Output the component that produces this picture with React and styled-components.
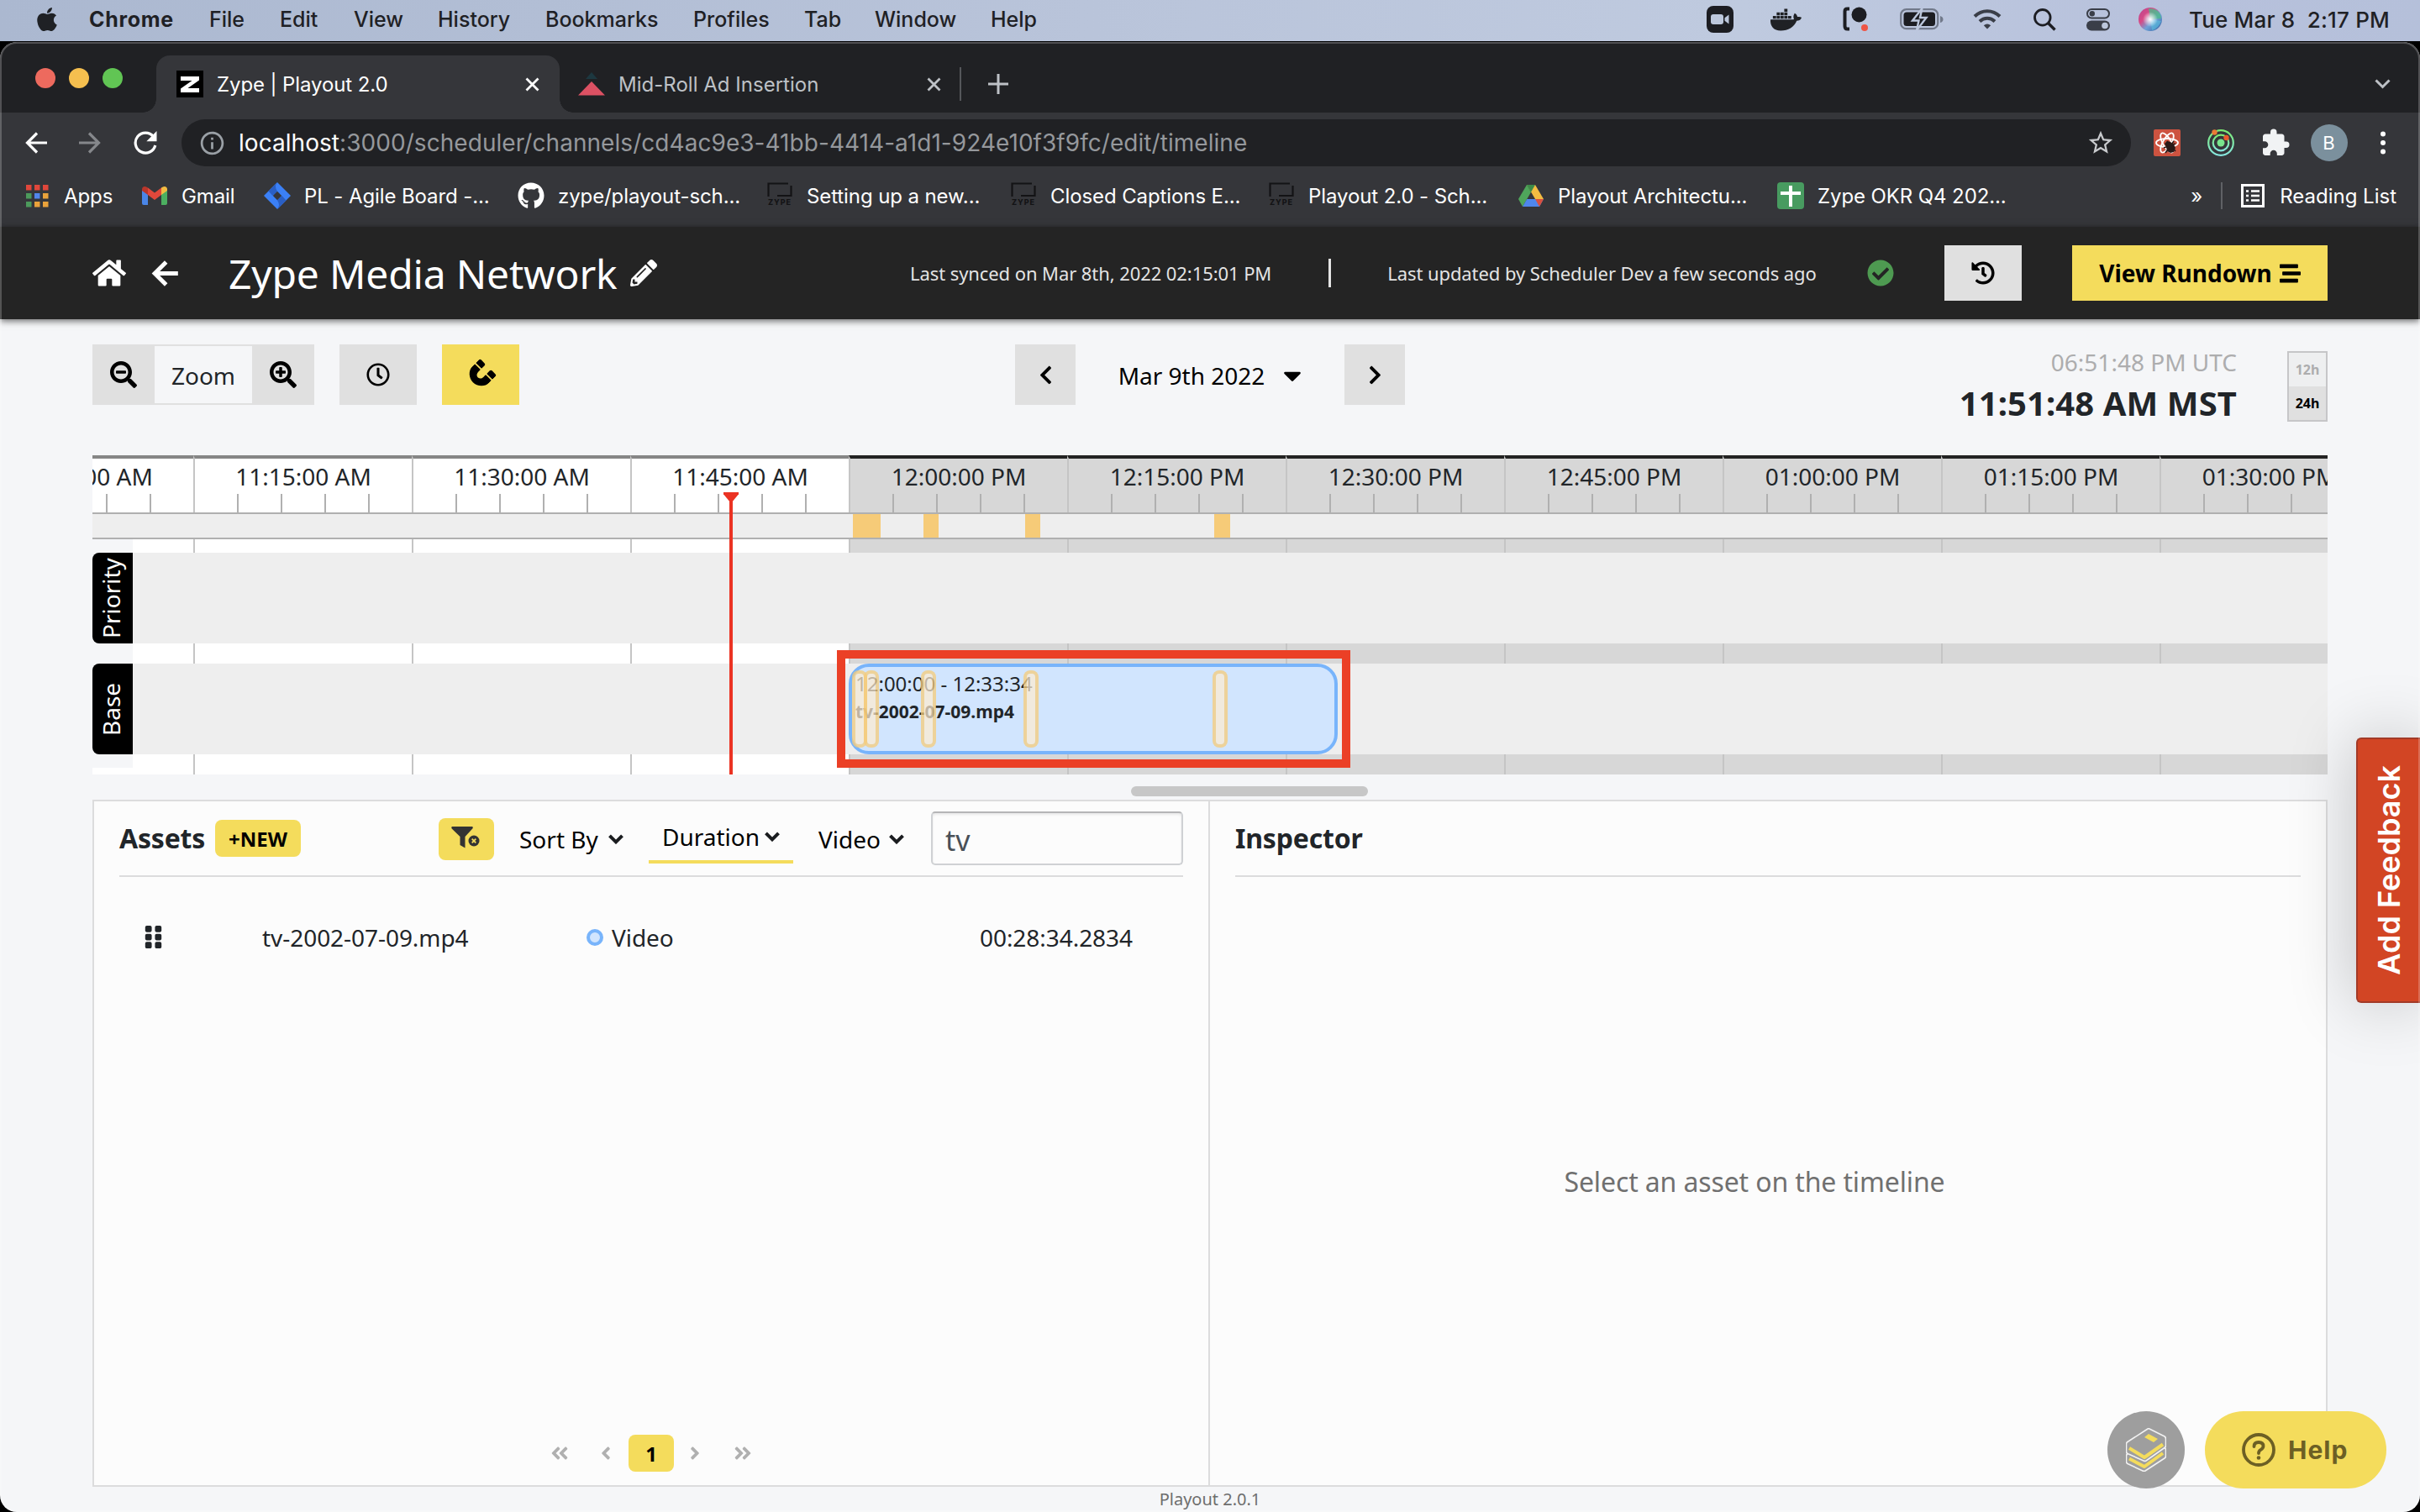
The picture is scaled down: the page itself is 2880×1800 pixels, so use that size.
import React from "react";
import styled, { createGlobalStyle, css } from "styled-components";
import {
  FaApple, FaDocker, FaHome, FaSearchMinus, FaSearchPlus, FaMagnet, FaHistory, FaStream,
  FaCheckCircle, FaGithub, FaGripVertical, FaChevronLeft, FaChevronRight, FaPencilAlt,
  FaRegClock, FaAngleDoubleLeft, FaAngleDoubleRight, FaAngleLeft, FaAngleRight, FaCaretDown,
} from "react-icons/fa";
import { MdExtension, MdStarOutline, MdInfoOutline } from "react-icons/md";

const appFont = '"Noto Sans", "Open Sans", sans-serif';
const systemFont = 'Inter, Roboto, "Liberation Sans", sans-serif';
const yellow = "#f4dc5c";
const grey = "#e0e0e0";
const ink = "#212529";
const line = "#dcdcdd";

const GlobalStyle = createGlobalStyle`
  * { box-sizing: border-box; }
  html, body { margin: 0; background: #000; overflow: hidden; }
  svg { display: block; flex: none; }
  button, input { font: inherit; border: 0; padding: 0; margin: 0; color: inherit; }
`;

const Desktop = styled.div`
  width: 2880px;
  height: 1800px;
  display: flex;
  flex-direction: column;
  background: #000;
  font-family: ${systemFont};
  white-space: nowrap;
`;

/* ---------- menu bar ---------- */

const MenuBar = styled.header`
  height: 49px;
  flex: none;
  display: flex;
  align-items: center;
  justify-content: space-between;
  padding: 0 36px 3px 40px;
  background: linear-gradient(90deg, #abb8d0 0%, #b9c4da 45%, #bfcadf 72%, #b7c1dc 90%, #b5c0da 100%);
  color: #1f2125;
  font-size: 25px;
`;
const MenuGroup = styled.nav`
  display: flex;
  align-items: center;
`;
const MenuItem = styled.span`
  width: ${(p) => p.$w}px;
  font-weight: ${(p) => (p.$bold ? 700 : 450)};
  letter-spacing: ${(p) => (p.$bold ? 0.7 : 0)}px;
`;
const StatusIcon = styled.span`
  width: ${(p) => p.$w}px;
  display: flex;
  align-items: center;
`;
const ClockText = styled.span`
  white-space: pre;
  font-size: 26px;
  letter-spacing: 0.2px;
  font-weight: 450;
`;

/* ---------- browser chrome ---------- */

const Window = styled.main`
  position: relative;
  flex: 1;
  min-height: 0;
  display: flex;
  flex-direction: column;
  background: #f5f6f8;
  border-radius: 20px;
  overflow: hidden;
  margin-top: 1px;
  &::after {
    content: "";
    position: absolute;
    inset: 0;
    border-radius: 20px;
    border: 2px solid rgba(255, 255, 255, 0.22);
    pointer-events: none;
  }
`;
const TabStrip = styled.div`
  height: 84px;
  flex: none;
  background: #202124;
  display: flex;
  align-items: flex-end;
  padding: 0 35px 0 42px;
  color: #bdc1c6;
  font-size: 24px;
`;
const Lights = styled.div`
  display: flex;
  gap: 16px;
  width: 144px;
  height: 82px;
  align-items: center;
`;
const Light = styled.i`
  width: 24px;
  height: 24px;
  border-radius: 50%;
  background: ${(p) => p.$c};
`;
const Tab = styled.div`
  position: relative;
  height: 68px;
  width: 480px;
  display: flex;
  align-items: center;
  padding: 0 ${(p) => (p.$active ? "24px 0 24px" : "26px 0 22px")};
  gap: 16px;
  letter-spacing: ${(p) => (p.$active ? -0.1 : 0.02)}px;
  ${(p) =>
    p.$active &&
    css`
      background: #35363a;
      color: #fff;
      border-radius: 16px 16px 0 0;
      &::before,
      &::after {
        content: "";
        position: absolute;
        bottom: 0;
        width: 16px;
        height: 16px;
      }
      &::before {
        left: -16px;
        background: radial-gradient(circle at 0 0, transparent 15.5px, #35363a 16px);
      }
      &::after {
        right: -16px;
        background: radial-gradient(circle at 100% 0, transparent 15.5px, #35363a 16px);
      }
    `}
`;
const TabTitle = styled.span`
  flex: 1;
`;
const TabTools = styled.div`
  flex: 1;
  height: 68px;
  display: flex;
  align-items: center;
  justify-content: space-between;
`;
const NewTab = styled.span`
  display: flex;
  align-items: center;
  height: 40px;
  padding-left: 32px;
  margin-left: -4px;
  border-left: 2px solid #55575b;
`;
const AddressRow = styled.div`
  height: 72px;
  flex: none;
  background: #35363a;
  display: flex;
  align-items: center;
  padding: 0 41px 0 29px;
`;
const NavSlot = styled.span`
  display: flex;
  width: ${(p) => p.$w}px;
`;
const Omnibox = styled.div`
  width: 2320px;
  height: 56px;
  border-radius: 28px;
  background: #202124;
  display: flex;
  align-items: center;
  padding: 0 19px 0 20px;
  color: #9aa0a6;
  font-size: 28px;
`;
const Url = styled.span`
  flex: 1;
  margin-left: 15px;
  color: #95989c;
  letter-spacing: 0.05px;
  b {
    font-weight: 400;
    color: #fff;
  }
`;
const Extensions = styled.div`
  flex: 1;
  display: flex;
  align-items: center;
  justify-content: space-between;
  padding-left: 27px;
`;
const Avatar = styled.span`
  width: 44px;
  height: 44px;
  margin: 0 8px 0 -8px;
  border-radius: 50%;
  background: #7b909d;
  color: #fff;
  font-size: 22px;
  display: grid;
  place-items: center;
`;
const BookmarkBar = styled.div`
  height: 64px;
  flex: none;
  background: #35363a;
  display: flex;
  align-items: flex-start;
  padding: 11px 28px 0 28px;
  color: #fff;
  font-size: 24px;
`;
const Bookmark = styled.span`
  width: ${(p) => p.$w}px;
  height: 32px;
  display: flex;
  align-items: center;
  gap: 16px;
  letter-spacing: -0.1px;
`;
const ReadingList = styled.span`
  margin-left: auto;
  height: 32px;
  display: flex;
  align-items: center;
  gap: 18px;
`;
const BarDivider = styled.i`
  width: 2px;
  height: 32px;
  background: #5f6165;
  margin: 0 4px;
`;

/* ---------- application header ---------- */

const AppHeader = styled.header`
  position: relative;
  height: 110px;
  flex: none;
  background: #242424;
  color: #fff;
  font-family: ${appFont};
  display: flex;
  align-items: center;
  padding: 0 110px;
  box-shadow: 0 2px 8px rgba(0, 0, 0, 0.6);
`;
const Title = styled.h1`
  margin: 0 0 0 59px;
  width: 478px;
  font-size: 48px;
  font-weight: 400;
  letter-spacing: -0.2px;
`;
const Status = styled.div`
  display: flex;
  align-items: center;
  margin-left: 301px;
  font-size: 22px;
  letter-spacing: -0.08px;
  color: #e4e4e4;
`;
const StatusDivider = styled.i`
  width: 3px;
  height: 34px;
  background: #e4e4e4;
  margin: 0 67px 0 68px;
`;
const HeaderActions = styled.div`
  margin-left: auto;
  display: flex;
  align-items: center;
  color: #000;
`;
const Button = styled.button`
  display: flex;
  align-items: center;
  justify-content: center;
  gap: 9px;
  width: ${(p) => p.$w}px;
  height: ${(p) => p.$h}px;
  background: ${(p) => (p.$yellow ? yellow : grey)};
  border-radius: ${(p) => p.$r ?? 0}px;
  color: #000;
  font-size: ${(p) => p.$size ?? 28}px;
  font-weight: 700;
`;

/* ---------- toolbar ---------- */

const Page = styled.section`
  flex: 1;
  min-height: 0;
  display: flex;
  flex-direction: column;
  padding: 30px 110px 0;
  font-family: ${appFont};
  font-size: 28px;
  color: ${ink};
`;
const Toolbar = styled.div`
  height: 132px;
  flex: none;
  display: grid;
  grid-template-columns: 1fr auto 1fr;
  align-items: start;
`;
const ToolGroup = styled.div`
  display: flex;
  gap: 30px;
`;
const ZoomGroup = styled.div`
  display: flex;
`;
const ZoomLabel = styled.span`
  width: 116px;
  height: 72px;
  border: solid ${grey};
  border-width: 2px 0;
  display: grid;
  place-items: center;
  padding-top: 2px;
`;
const DatePicker = styled.div`
  display: flex;
`;
const DateValue = styled.div`
  width: 320px;
  display: flex;
  align-items: center;
  justify-content: center;
  gap: 16px;
  padding: 2px 0 0 6px;
  color: #000;
`;
const ClockPanel = styled.div`
  display: flex;
  justify-content: flex-end;
  gap: 60px;
`;
const Times = styled.div`
  text-align: right;
  padding-top: 6px;
`;
const Utc = styled.div`
  line-height: 30px;
  color: #adadae;
`;
const Local = styled.div`
  margin-top: 14px;
  line-height: 40px;
  font-size: 40px;
  font-weight: 700;
  letter-spacing: 0.1px;
`;
const FormatToggle = styled.div`
  margin-top: 8px;
  width: 48px;
  height: 84px;
  border: 2px solid #c6c6c8;
  display: grid;
  grid-template-rows: 1fr 1fr;
`;
const FormatOption = styled.span`
  display: grid;
  place-items: center;
  font-size: 16px;
  font-weight: 700;
  background: ${(p) => (p.$on ? grey : "#eeeff0")};
  color: ${(p) => (p.$on ? "#000" : "#adadae")};
`;

/* ---------- timeline ---------- */

const Timeline = styled.div`
  height: 380px;
  flex: none;
  display: grid;
  overflow: hidden;
  position: relative;
  grid-template-columns: 2660px;
  & > * {
    grid-area: 1 / 1;
  }
`;
const Ruler = styled.div`
  display: flex;
  margin-left: -140px;
  width: 2860px;
`;
const RulerCell = styled.div`
  flex: none;
  width: 260px;
  border-left: 2px solid #c5c5c5;
  border-top: 4px solid ${(p) => (p.$future ? "#232323" : "#868686")};
  background: ${(p) => (p.$future ? "#d7d7d7" : "#fff")};
`;
const RulerLabel = styled.div`
  line-height: 42px;
  text-align: center;
`;
const Ticks = styled.div`
  height: 22px;
  display: flex;
  gap: 50px;
  padding-left: 50px;
`;
const Tick = styled.i`
  width: 2px;
  background: #b0b0b0;
`;
const Lanes = styled.div`
  margin-top: 68px;
  display: flex;
  flex-direction: column;
`;
const AdStrip = styled.div`
  position: relative;
  height: 32px;
  background: #eee;
  border: solid #b0b0b0;
  border-width: 2px 0;
`;
const AdMark = styled.i`
  position: absolute;
  top: 0;
  bottom: 0;
  left: ${(p) => p.$x}px;
  width: ${(p) => p.$w}px;
  background: #f6cb78;
`;
const LaneStack = styled.div`
  display: grid;
  height: 280px;
  grid-template-columns: 48px 1fr;
  grid-template-rows: 16px 108px 24px 108px 16px;
`;
const Gutter = styled.div`
  background: #f5f6f8;
  grid-column: 1;
  grid-row: 1 / 6;
`;
const LaneLabel = styled.div`
  grid-column: 1;
  grid-row: ${(p) => p.$row};
  background: #000;
  color: #fff;
  display: grid;
  place-items: center;
  padding-left: 5px;
  writing-mode: vertical-rl;
  transform: rotate(180deg);
  border-radius: 0 8px 8px 0;
`;
const Lane = styled.div`
  position: relative;
  grid-column: 2;
  grid-row: ${(p) => p.$row};
  background: #eee;
`;
const Clip = styled.div`
  position: absolute;
  left: 852px;
  top: 0;
  width: 582px;
  height: 108px;
  border: 4px solid #78b4fb;
  border-radius: 24px;
  background: #d1e5fe;
  padding: 2px 0 0 4px;
`;
const ClipTime = styled.div`
  font-size: 24px;
  line-height: 36px;
`;
const ClipName = styled.div`
  font-size: 21px;
  line-height: 31px;
  font-weight: 700;
`;
const AdPin = styled.i`
  position: absolute;
  top: 4px;
  left: ${(p) => p.$x}px;
  width: 18px;
  height: 92px;
  border: 4px solid rgba(246, 203, 120, 0.75);
  border-radius: 8px;
  background: rgba(253, 236, 208, 0.72);
  background-clip: padding-box;
`;
const Highlight = styled.div`
  position: absolute;
  left: 886px;
  top: 232px;
  width: 611px;
  height: 140px;
  border: 10px solid #eb4026;
`;
const Playhead = styled.div`
  position: absolute;
  left: 751px;
  top: 44px;
  bottom: 0;
  width: 18px;
  display: flex;
  flex-direction: column;
  align-items: center;
  &::before {
    content: "";
    width: 18px;
    height: 11px;
    background: #eb3323;
    clip-path: polygon(0 0, 100% 0, 100% 20%, 60% 100%, 40% 100%, 0 20%);
  }
  &::after {
    content: "";
    flex: 1;
    width: 4px;
    background: #eb3323;
  }
`;
const ScrollTrack = styled.div`
  height: 30px;
  flex: none;
  padding: 14px 0 0 1236px;
`;
const ScrollThumb = styled.div`
  width: 282px;
  height: 12px;
  border-radius: 6px;
  background: #c7c7c7;
`;

/* ---------- lower panels ---------- */

const Panels = styled.div`
  height: 818px;
  flex: none;
  display: grid;
  grid-template-columns: 1326px 1fr;
  border: 2px solid ${line};
  background: #fcfcfc;
`;
const Panel = styled.section`
  display: flex;
  flex-direction: column;
  padding: 0 30px;
  & + & {
    border-left: 2px solid ${line};
  }
`;
const PanelHeader = styled.div`
  height: 90px;
  flex: none;
  display: flex;
  align-items: center;
  border-bottom: 2px solid ${line};
`;
const PanelTitle = styled.h2`
  margin: 0 0 2px;
  width: 114px;
  font-size: 32px;
  letter-spacing: -0.2px;
  font-weight: 700;
`;
const Filters = styled.div`
  margin-left: auto;
  display: flex;
  align-items: center;
  color: #000;
`;
const FilterButton = styled(Button)`
  margin: 2px 8px 0 0;
`;
const Dropdown = styled.span`
  display: flex;
  align-items: center;
  justify-content: space-between;
  height: 58px;
  margin-top: 2px;
  padding: 0 ${(p) => (p.$selected ? "16px 4px" : "16px 0 22px")};
  width: ${(p) => p.$w}px;
  ${(p) =>
    p.$selected &&
    css`
      margin: 0 8px 0 14px;
      height: 60px;
      border: solid transparent;
      border-bottom-color: ${yellow};
      border-width: 4px 0;
    `}
`;
const SearchInput = styled.input`
  width: 300px;
  height: 64px;
  margin-left: 16px;
  padding: 4px 15px 0;
  border: 2px solid #cfd1d4;
  border-top-color: #b5b5b7;
  border-radius: 5px;
  background: #fcfcfc;
  box-shadow: inset 0 2px 3px rgba(0, 0, 0, 0.08);
  color: #495057;
  font-size: 34px;
`;
const AssetRow = styled.div`
  display: grid;
  grid-template-columns: 145px 386px 1fr auto;
  align-items: center;
  height: 143px;
  padding: 0 60px 0 25px;
  letter-spacing: -0.05px;
`;
const AssetType = styled.span`
  display: flex;
  align-items: center;
  gap: 10px;
`;
const TypeDot = styled.i`
  width: 20px;
  height: 20px;
  border-radius: 50%;
  border: 4px solid #78b4fb;
  background: #d1e5fe;
`;
const Pagination = styled.div`
  margin: auto 0 16px 512px;
  display: flex;
  align-items: center;
  color: #b0b0b0;
`;
const PageArrow = styled.span`
  width: ${(p) => p.$w}px;
  padding-left: ${(p) => p.$pad ?? 0}px;
`;
const Placeholder = styled.div`
  flex: 1;
  display: grid;
  place-items: center;
  padding-right: 32px;
  font-size: 32px;
  letter-spacing: -0.13px;
  color: #707070;
`;
const Footer = styled.footer`
  height: 30px;
  line-height: 29px;
  text-align: center;
  font-size: 20px;
  color: #6e6e6e;
`;

/* ---------- floating widgets ---------- */

const Feedback = styled.aside`
  position: absolute;
  right: 0;
  top: 828px;
  width: 76px;
  height: 316px;
  border: 2px solid #a23a27;
  border-right: 0;
  border-radius: 6px 0 0 6px;
  background: #d24524;
  box-shadow: 0 0 80px rgba(0, 0, 0, 0.22);
  color: #fff;
  font-size: 36px;
  font-weight: 600;
  display: grid;
  place-items: center;
  span {
    writing-mode: vertical-rl;
    transform: rotate(180deg);
  }
`;
const HelpDock = styled.aside`
  position: absolute;
  right: 40px;
  bottom: 28px;
  display: flex;
  gap: 24px;
`;
const BooksButton = styled.span`
  width: 92px;
  height: 92px;
  border-radius: 50%;
  background: #9e9e9e;
  display: grid;
  place-items: center;
`;
const HelpButton = styled.span`
  width: 216px;
  height: 92px;
  border-radius: 46px;
  background: ${yellow};
  color: #6c5f24;
  display: flex;
  align-items: center;
  padding-left: 44px;
  gap: 15px;
  font-size: 30px;
  font-weight: 700;
  letter-spacing: 1px;
`;

/* ---------- drawings ---------- */

const ZoomCam = () => (
  <svg width="32" height="32" viewBox="0 0 32 32">
    <rect width="32" height="32" rx="8" fill="#1c1d22" />
    <rect x="5" y="10" width="15" height="12" rx="3" fill="#bcc7dc" />
    <path d="M21.5 14.2l5-3.6v10.8l-5-3.6z" fill="#bcc7dc" />
  </svg>
);
const Recorder = () => (
  <svg width="30" height="30" viewBox="0 0 30 30">
    <path d="M8 2.5H5.5Q2.5 2.500 2.500 5.500V23Q2.500 26.500 5.500 26.500H8" fill="none" stroke="#1c1d22" strokeWidth="4" />
    <circle cx="19.500" cy="9.500" r="9" fill="#1c1d22" />
    <circle cx="26" cy="25" r="4" fill="#ee5545" />
  </svg>
);
const Battery = () => (
  <svg width="52" height="26" viewBox="0 0 52 26">
    <rect x="1.200" y="1.200" width="44" height="23" rx="6.500" fill="none" stroke="#71798a" strokeWidth="2.200" />
    <path d="M48 9q3.500 1 3.500 4t-3.500 4z" fill="#71798a" />
    <rect x="4.500" y="4.500" width="37.500" height="16.500" rx="3.500" fill="#1c1d22" />
    <path d="M26.500 0L15 14.500h7.500L20 26 31.500 11H24z" fill="#1c1d22" stroke="#bcc7dc" strokeWidth="2.400" />
  </svg>
);
const Wifi = () => (
  <svg width="34" height="26" viewBox="0 0 34 26" fill="none" stroke="#3a3e48" strokeWidth="4">
    <path d="M2 9.500C10.500 1 23.500 1 32 9.500" />
    <path d="M8 15.500c5.200-5 12.800-5 18 0" />
    <path d="M12.800 20.300q4.200-3.400 8.400 0L17 24.500z" fill="#3a3e48" stroke="none" />
  </svg>
);
const Magnifier = () => (
  <svg width="27" height="27" viewBox="0 0 27 27" fill="none" stroke="#1c1d22" strokeWidth="2.800">
    <circle cx="10.800" cy="10.800" r="9.300" />
    <path d="M17.500 17.500l8 8" strokeWidth="3.400" />
  </svg>
);
const ControlCenter = () => (
  <svg width="28" height="27" viewBox="0 0 28 27">
    <rect x="1" y="1" width="26" height="10.500" rx="5.250" fill="none" stroke="#3a3e48" strokeWidth="2" />
    <circle cx="6.800" cy="6.250" r="3.200" fill="#3a3e48" />
    <rect y="14.500" width="28" height="12" rx="6" fill="#3a3e48" />
    <circle cx="22" cy="20.500" r="3.800" fill="#bcc7dc" />
  </svg>
);
const Siri = () => (
  <svg width="28" height="28" viewBox="0 0 28 28">
    <defs>
      <linearGradient id="siriA" x1="0" y1="0" x2="1" y2="1">
        <stop offset="0" stopColor="#b8478f" />
        <stop offset=".35" stopColor="#d84a86" />
        <stop offset=".6" stopColor="#6fa2d8" />
        <stop offset="1" stopColor="#2f5a9c" />
      </linearGradient>
      <radialGradient id="siriB">
        <stop offset="0" stopColor="#fff" />
        <stop offset="1" stopColor="#fff" stopOpacity="0" />
      </radialGradient>
    </defs>
    <circle cx="14" cy="14" r="14" fill="url(#siriA)" />
    <path d="M14 14L12 1Q26 1 27 13z" fill="#4fb98b" opacity=".8" />
    <path d="M14 14l13 2q-3 9-11 11z" fill="#58bfe0" opacity=".6" />
    <circle cx="14" cy="14" r="9" fill="url(#siriB)" />
  </svg>
);
const ZypeFavicon = () => (
  <svg width="32" height="32" viewBox="0 0 32 32">
    <rect width="32" height="32" fill="#000" />
    <path d="M5 7h22v4.500L13.500 21H27v5H5v-4.500L18.500 12H5z" fill="#fff" />
  </svg>
);
const TriangleFavicon = () => (
  <svg width="32" height="28" viewBox="0 0 32 28">
    <path d="M16 0l7 8H9z" fill="#1d3840" />
    <path d="M16 11l16 16.500H0z" fill="#dc5163" />
  </svg>
);
const Cross = () => (
  <svg width="17" height="17" viewBox="0 0 17 17" stroke="currentColor" strokeWidth="2.800">
    <path d="M1.500 1.500l14 14M15.500 1.500l-14 14" />
  </svg>
);
const Arrow = ({ color, flip, size = 28, weight = 3.2 }) => (
  <svg width={size} height={size} viewBox="0 0 28 28" fill="none" stroke={color} strokeWidth={weight} transform={flip ? "scale(-1 1)" : undefined}>
    <path d="M27 14H4M15 2.500L3.500 14 15 25.500" />
  </svg>
);
const Reload = () => (
  <svg width="28" height="28" viewBox="0 0 28 28">
    <path d="M23.500 6.500A12 12 0 1 0 25.800 17" fill="none" stroke="#fff" strokeWidth="3.200" />
    <path d="M27.500 0v12.200H15.300z" fill="#fff" />
  </svg>
);
const ReactTool = () => (
  <svg width="32" height="32" viewBox="0 0 32 32">
    <rect width="32" height="32" rx="2" fill="#cd5340" />
    <g fill="none" stroke="#fff" strokeWidth="1.800">
      <ellipse cx="16" cy="16" rx="13" ry="5" />
      <ellipse cx="16" cy="16" rx="13" ry="5" transform="rotate(60 16 16)" />
      <ellipse cx="16" cy="16" rx="13" ry="5" transform="rotate(120 16 16)" />
    </g>
    <path d="M13 17l3-3 4 1 4 3 2 4-2 5-4 1-4-2-1-5z" fill="#2a1a18" />
    <path d="M12 22l14-5M14 28l10-14M16 14l10 12" stroke="#2a1a18" strokeWidth="1.600" />
  </svg>
);
const Orbit = () => (
  <svg width="32" height="32" viewBox="0 0 32 32" fill="none">
    <defs>
      <linearGradient id="orbit" x1="0" y1="0" x2="0" y2="1">
        <stop offset="0" stopColor="#7bea72" />
        <stop offset="1" stopColor="#86e6df" />
      </linearGradient>
    </defs>
    <circle cx="16" cy="16" r="14.800" stroke="url(#orbit)" strokeWidth="2.200" />
    <circle cx="16" cy="16" r="9.300" stroke="url(#orbit)" strokeWidth="2.200" />
    <circle cx="16" cy="16" r="4.500" fill="#79e58d" />
    <circle cx="8.500" cy="3.500" r="3.200" fill="#ea7a35" />
    <circle cx="22.500" cy="10" r="3.200" fill="#e85a2c" />
  </svg>
);
const Kebab = () => (
  <svg width="6" height="28" viewBox="0 0 6 28" fill="#fff">
    <circle cx="3" cy="3.500" r="3" />
    <circle cx="3" cy="14" r="3" />
    <circle cx="3" cy="24.500" r="3" />
  </svg>
);
const AppsGrid = () => (
  <svg width="32" height="32" viewBox="0 0 32 32">
    {["#e0473b", "#e0473b", "#e0473b", "#4c9a5c", "#5186ec", "#e9a23b", "#4c9a5c", "#e9a23b", "#e9a23b"].map((c, i) => (
      <rect key={i} x={3 + (i % 3) * 10} y={3 + Math.floor(i / 3) * 10} width="6.500" height="6.500" fill={c} />
    ))}
  </svg>
);
const GmailIcon = () => (
  <svg width="32" height="32" viewBox="0 0 32 32">
    <path d="M1 8v17q0 2 2 2h5V13z" fill="#4a86e8" />
    <path d="M31 8v17q0 2-2 2h-5V13z" fill="#4caf60" />
    <path d="M8 6.500l8 6 8-6V15l-8 6-8-6z" fill="#e0483b" />
    <path d="M1 8.500Q1 5 4.500 5 6 5 8 6.500V15l-7-5z" fill="#b9362b" />
    <path d="M31 8.500Q31 5 27.500 5 26 5 24 6.500V15l7-5z" fill="#f2bb42" />
  </svg>
);
const JiraIcon = () => (
  <svg width="32" height="32" viewBox="0 0 32 32">
    <path d="M16 0l16 16-16 16L0 16z" fill="#3b80f6" />
    <path d="M16 0q-4 5 0 10.500L10.500 16 5.500 10.500z" fill="#2a5fc4" />
    <path d="M16 32q4-5 0-10.500l5.500-5.500 5 5.500z" fill="#2a5fc4" />
    <path d="M16 10.800l5.200 5.200-5.200 5.200-5.200-5.200z" fill="#35363a" />
  </svg>
);
const ZypeMark = styled.span`
  width: 32px;
  height: 32px;
  display: flex;
  flex-direction: column;
  align-items: center;
  color: #131315;
  font-size: 9px;
  font-weight: 800;
  line-height: 12px;
  letter-spacing: 1px;
`;
const ZypeDoc = () => (
  <ZypeMark>
    <svg width="30" height="18" viewBox="0 0 30 18" fill="none" stroke="#131315" strokeWidth="2.200">
      <path d="M1.500 17V1.500H25M28.500 4v12H12" />
    </svg>
    ZYPE
  </ZypeMark>
);
const DriveIcon = () => (
  <svg width="32" height="32" viewBox="0 0 32 32">
    <path d="M11 3h10l10 17H21z" fill="#f3bc42" />
    <path d="M11 3l5 8.700L6 29 1 20z" fill="#4fa55b" />
    <path d="M11 3h10l-5 8.700z" fill="#3b8a48" />
    <path d="M6 29l5.200-9H31l-5 9z" fill="#4f86ec" />
    <path d="M21 20h10l-5 9z" fill="#d9503f" />
  </svg>
);
const SheetsIcon = () => (
  <svg width="32" height="32" viewBox="0 0 32 32">
    <rect width="32" height="32" rx="4" fill="#489b60" />
    <path d="M14 4h4v7h10v4H18v14h-4V15H4v-4h10z" fill="#fff" />
  </svg>
);
const ReadingIcon = () => (
  <svg width="28" height="28" viewBox="0 0 28 28" fill="none" stroke="#fff">
    <rect x="1.500" y="1.500" width="25" height="25" strokeWidth="3" />
    <path d="M6 8.500h3M6 14h3M6 19.500h3M12 8.500h10M12 14h10M12 19.500h10" strokeWidth="2.600" />
  </svg>
);
const Books = () => (
  <svg width="48" height="52" viewBox="0 0 48 52" fill="none" strokeLinejoin="round">
    <path d="M26 1q1-.5 2 0l18 9q1.500 1 1.500 3v8q0 1.500-1.500 2.500L24 39q-1.500.8-3 0L2 30.500Q.500 29.500.500 28v-9q0-1.500 1.500-2.500z" stroke="#f2f2f2" strokeWidth="1.600" />
    <path d="M2 30.500q-1.500 1-1.500 3v6.500q0 1.500 1.500 2.500l18 8.500q1.500.8 3 0L46 36q1.500-1 1.500-2.500V26q0-1.500-1.500-2.500" stroke="#f2f2f2" strokeWidth="1.600" />
    <path d="M4 24l18 11 22-15.500M4 36.500L22 46l22-16" stroke={yellow} strokeWidth="4" />
    <path d="M27 7l11 6-5 4-11-6z" fill={yellow} />
  </svg>
);
const QuestionCircle = () => (
  <svg width="40" height="40" viewBox="0 0 40 40" fill="none" stroke="#6c5f24" strokeWidth="3.800">
    <circle cx="20" cy="20" r="18" />
    <path d="M14.500 16q0-5 5.500-5 5.500 0 5.500 4.600 0 2.600-3 4.300-2.500 1.400-2.500 4.100" strokeLinecap="round" />
    <circle cx="20" cy="29.500" r="2.300" fill="#6c5f24" stroke="none" />
  </svg>
);
const FilterClear = () => (
  <svg width="36" height="30" viewBox="0 0 36 30">
    <path d="M1 0h24q1.500 1 .300 2.500L16.500 12v13.500l-6-3.500V12L.700 2.500Q-.300 1 1 0z" fill="#333" />
    <circle cx="27" cy="17" r="6.500" fill="#333" />
    <path d="M24.700 14.700l4.600 4.600M29.300 14.700l-4.600 4.600" stroke={yellow} strokeWidth="1.800" />
  </svg>
);
const Plus = () => (
  <svg width="24" height="24" viewBox="0 0 24 24" stroke="#bdc1c6" strokeWidth="3">
    <path d="M12 0v24M0 12h24" />
  </svg>
);
const TabChevron = () => (
  <svg width="19" height="12" viewBox="0 0 19 12" fill="none" stroke="#bdc1c6" strokeWidth="3">
    <path d="M1.500 1.500l8 8 8-8" />
  </svg>
);
const DropChevron = () => (
  <svg width="18" height="12" viewBox="0 0 18 12" fill="none" stroke="#1a1c1f" strokeWidth="4">
    <path d="M1.500 1.800L9 9.300l7.500-7.500" />
  </svg>
);

/* ---------- data ---------- */

const menus = [
  ["File", 84], ["Edit", 88], ["View", 100], ["History", 128], ["Bookmarks", 176],
  ["Profiles", 132], ["Tab", 84], ["Window", 138], ["Help", 60],
];
const bookmarks = [
  ["Apps", AppsGrid, 140], ["Gmail", GmailIcon, 146], ["PL - Agile Board -...", JiraIcon, 302],
  ["zype/playout-sch...", null, 296], ["Setting up a new...", ZypeDoc, 290], ["Closed Captions E...", ZypeDoc, 307],
  ["Playout 2.0 - Sch...", ZypeDoc, 297], ["Playout Architectu...", DriveIcon, 309], ["Zype OKR Q4 202...", SheetsIcon, 300],
];
const hours = [
  "11:00:00 AM", "11:15:00 AM", "11:30:00 AM", "11:45:00 AM", "12:00:00 PM", "12:15:00 PM",
  "12:30:00 PM", "12:45:00 PM", "01:00:00 PM", "01:15:00 PM", "01:30:00 PM",
];
const adMarks = [[905, 33], [989, 18], [1110, 18], [1335, 19]];
const adPins = [0, 14, 82, 204, 429];

export default function App() {
  return (
    <Desktop>
      <GlobalStyle />
      <MenuBar>
        <MenuGroup>
          <StatusIcon $w={66}><FaApple size={32} /></StatusIcon>
          <MenuItem $w={143} $bold>Chrome</MenuItem>
          {menus.map(([label, w]) => (
            <MenuItem key={label} $w={w}>{label}</MenuItem>
          ))}
        </MenuGroup>
        <MenuGroup>
          <StatusIcon $w={76}><ZoomCam /></StatusIcon>
          <StatusIcon $w={86}><FaDocker size={37} /></StatusIcon>
          <StatusIcon $w={68}><Recorder /></StatusIcon>
          <StatusIcon $w={87}><Battery /></StatusIcon>
          <StatusIcon $w={72}><Wifi /></StatusIcon>
          <StatusIcon $w={63}><Magnifier /></StatusIcon>
          <StatusIcon $w={62}><ControlCenter /></StatusIcon>
          <StatusIcon $w={60}><Siri /></StatusIcon>
          <ClockText>Tue Mar 8  2:17 PM</ClockText>
        </MenuGroup>
      </MenuBar>

      <Window>
        <TabStrip>
          <Lights><Light $c="#ed6a5e" /><Light $c="#f5bf4f" /><Light $c="#61c554" /></Lights>
          <Tab $active><ZypeFavicon /><TabTitle>Zype | Playout 2.0</TabTitle><Cross /></Tab>
          <Tab><TriangleFavicon /><TabTitle>Mid-Roll Ad Insertion</TabTitle><Cross /></Tab>
          <TabTools><NewTab><Plus /></NewTab><TabChevron /></TabTools>
        </TabStrip>
        <AddressRow>
          <NavSlot $w={64}><Arrow color="#fff" /></NavSlot>
          <NavSlot $w={66}><Arrow color="#85878b" flip /></NavSlot>
          <NavSlot $w={57}><Reload /></NavSlot>
          <Omnibox>
            <MdInfoOutline size={33} />
            <Url><b>localhost</b>:3000/scheduler/channels/cd4ac9e3-41bb-4414-a1d1-924e10f3f9fc/edit/timeline</Url>
            <MdStarOutline size={34} color="#c8cacd" />
          </Omnibox>
          <Extensions>
            <ReactTool /><Orbit /><MdExtension size={36} color="#f1f3f4" /><Avatar>B</Avatar><Kebab />
          </Extensions>
        </AddressRow>
        <BookmarkBar>
          {bookmarks.map(([label, Icon, w]) => (
            <Bookmark key={label} $w={w}>{Icon ? <Icon /> : <FaGithub size={32} />}{label}</Bookmark>
          ))}
          <ReadingList>»<BarDivider /><ReadingIcon />Reading List</ReadingList>
        </BookmarkBar>

        <AppHeader>
          <NavSlot $w={70}><FaHome size={40} /></NavSlot>
          <Arrow color="#fff" size={33} weight={4.2} />
          <Title>Zype Media Network</Title>
          <FaPencilAlt size={32} />
          <Status>
            Last synced on Mar 8th, 2022 02:15:01 PM
            <StatusDivider />
            Last updated by Scheduler Dev a few seconds ago
          </Status>
          <HeaderActions>
            <NavSlot $w={92}><FaCheckCircle size={32} color="#4e9a51" /></NavSlot>
            <Button $w={92} $h={66}><FaHistory size={28} /></Button>
            <NavSlot $w={60} />
            <Button $w={304} $h={66} $yellow>View Rundown<FaStream size={25} /></Button>
          </HeaderActions>
        </AppHeader>

        <Page>
          <Toolbar>
            <ToolGroup>
              <ZoomGroup>
                <Button $w={74} $h={72}><FaSearchMinus size={32} /></Button>
                <ZoomLabel>Zoom</ZoomLabel>
                <Button $w={74} $h={72}><FaSearchPlus size={32} /></Button>
              </ZoomGroup>
              <Button $w={92} $h={72}><FaRegClock size={28} /></Button>
              <Button $w={92} $h={72} $yellow><FaMagnet size={28} transform="rotate(45)" /></Button>
            </ToolGroup>
            <DatePicker>
              <Button $w={72} $h={72}><FaChevronLeft size={25} /></Button>
              <DateValue>Mar 9th 2022<FaCaretDown size={34} /></DateValue>
              <Button $w={72} $h={72}><FaChevronRight size={25} /></Button>
            </DatePicker>
            <ClockPanel>
              <Times>
                <Utc>06:51:48 PM UTC</Utc>
                <Local>11:51:48 AM MST</Local>
              </Times>
              <FormatToggle>
                <FormatOption>12h</FormatOption>
                <FormatOption $on>24h</FormatOption>
              </FormatToggle>
            </ClockPanel>
          </Toolbar>

          <Timeline>
            <Ruler>
              {hours.map((h, i) => (
                <RulerCell key={h} $future={i > 3}>
                  <RulerLabel>{h}</RulerLabel>
                  <Ticks><Tick /><Tick /><Tick /><Tick /></Ticks>
                </RulerCell>
              ))}
            </Ruler>
            <Lanes>
              <AdStrip>{adMarks.map(([x, w]) => <AdMark key={x} $x={x} $w={w} />)}</AdStrip>
              <LaneStack>
                <Gutter />
                <LaneLabel $row={2}>Priority</LaneLabel>
                <Lane $row={2} />
                <LaneLabel $row={4}>Base</LaneLabel>
                <Lane $row={4}>
                  <Clip>
                    <ClipTime>12:00:00 - 12:33:34</ClipTime>
                    <ClipName>tv-2002-07-09.mp4</ClipName>
                    {adPins.map((x) => <AdPin key={x} $x={x} />)}
                  </Clip>
                </Lane>
              </LaneStack>
            </Lanes>
            <Playhead />
            <Highlight />
          </Timeline>
          <ScrollTrack><ScrollThumb /></ScrollTrack>

          <Panels>
            <Panel>
              <PanelHeader>
                <PanelTitle>Assets</PanelTitle>
                <Button $w={102} $h={44} $r={8} $yellow $size={24}>+NEW</Button>
                <Filters>
                  <FilterButton $w={66} $h={50} $r={8} $yellow><FilterClear /></FilterButton>
                  <Dropdown $w={162}>Sort By<DropChevron /></Dropdown>
                  <Dropdown $w={172} $selected>Duration<DropChevron /></Dropdown>
                  <Dropdown $w={140}>Video<DropChevron /></Dropdown>
                  <SearchInput defaultValue="tv" />
                </Filters>
              </PanelHeader>
              <AssetRow>
                <FaGripVertical size={31} />
                <span>tv-2002-07-09.mp4</span>
                <AssetType><TypeDot />Video</AssetType>
                <span>00:28:34.2834</span>
              </AssetRow>
              <Pagination>
                <PageArrow $w={55}><FaAngleDoubleLeft size={24} /></PageArrow>
                <PageArrow $w={39}><FaAngleLeft size={24} /></PageArrow>
                <Button $w={54} $h={44} $r={8} $yellow $size={24}>1</Button>
                <PageArrow $w={70} $pad={13}><FaAngleRight size={24} /></PageArrow>
                <FaAngleDoubleRight size={24} />
              </Pagination>
            </Panel>
            <Panel>
              <PanelHeader><PanelTitle>Inspector</PanelTitle></PanelHeader>
              <Placeholder>Select an asset on the timeline</Placeholder>
            </Panel>
          </Panels>
          <Footer>Playout 2.0.1</Footer>
        </Page>

        <Feedback><span>Add Feedback</span></Feedback>
        <HelpDock>
          <BooksButton><Books /></BooksButton>
          <HelpButton><QuestionCircle />Help</HelpButton>
        </HelpDock>
      </Window>
    </Desktop>
  );
}
